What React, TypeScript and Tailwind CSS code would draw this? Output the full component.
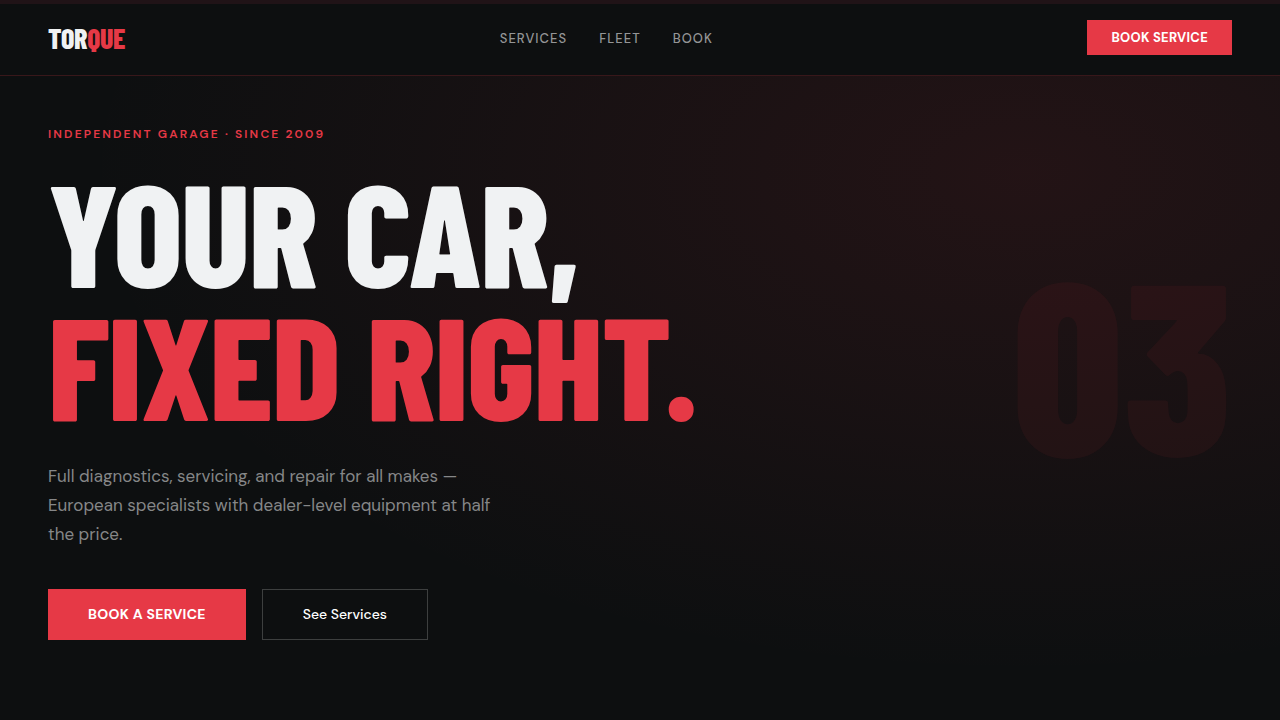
const navLinks = ["Services", "Fleet", "Book"];

export default function App() {
  return (
    <div className="flex min-h-screen flex-col bg-[#0d0f10] font-['DM_Sans',Inter,sans-serif] text-[#f0f2f3]">
      <div className="h-1 bg-[#201317]" />
      <header className="border-b border-[#e63946]/20">
        <nav className="flex items-center justify-between px-12 pt-4 pb-5">
          <a
            href="#top"
            className="font-['Barlow_Condensed','Roboto_Condensed',sans-serif] text-[28px] leading-8 font-extrabold tracking-[-0.01em] uppercase"
          >
            Tor<span className="text-[#e63946]">que</span>
          </a>
          <ul className="flex gap-8">
            {navLinks.map((label) => (
              <li key={label}>
                <a
                  href={`#${label.toLowerCase()}`}
                  className="text-[13px] leading-5 font-medium tracking-[0.08em] text-[#949596] uppercase"
                >
                  {label}
                </a>
              </li>
            ))}
          </ul>
          <button
            type="button"
            className="bg-[#e63946] px-6 py-2 text-[13px] leading-[19px] font-bold tracking-[0.02em] text-white uppercase"
          >
            Book Service
          </button>
        </nav>
      </header>

      <main
        id="top"
        className="relative flex-1 overflow-hidden bg-[radial-gradient(ellipse_at_80%_15%,rgba(230,57,70,0.1)_0%,transparent_65%)] px-12 pt-12 pb-20"
      >
        <p className="text-xs leading-5 font-semibold tracking-[0.18em] text-[#e63946] uppercase">
          Independent Garage · Since 2009
        </p>
        <h1 className="mt-5 font-['Barlow_Condensed','Roboto_Condensed',sans-serif] text-[144px] leading-[133px] font-extrabold tracking-[-0.01em] uppercase">
          Your car,
          <br />
          <span className="text-[#e63946]">fixed right.</span>
        </h1>
        <p className="mt-8 max-w-[460px] text-[17px] leading-[29px] text-[#868788]">
          Full diagnostics, servicing, and repair for all makes — European specialists with
          dealer-level equipment at half the price.
        </p>
        <div className="mt-10 flex gap-4">
          <button
            type="button"
            className="bg-[#e63946] px-10 py-4 text-sm leading-[19px] font-bold tracking-[0.02em] text-white uppercase"
          >
            Book a Service
          </button>
          <button
            type="button"
            className="border border-white/20 px-10 py-[15px] text-sm leading-[19px] font-medium text-white"
          >
            See Services
          </button>
        </div>
        <div
          aria-hidden="true"
          className="pointer-events-none absolute top-1/4 right-12 font-['Barlow_Condensed','Roboto_Condensed',sans-serif] text-[244px] leading-none font-extrabold text-[#e63946]/6"
        >
          03
        </div>
      </main>
    </div>
  );
}
